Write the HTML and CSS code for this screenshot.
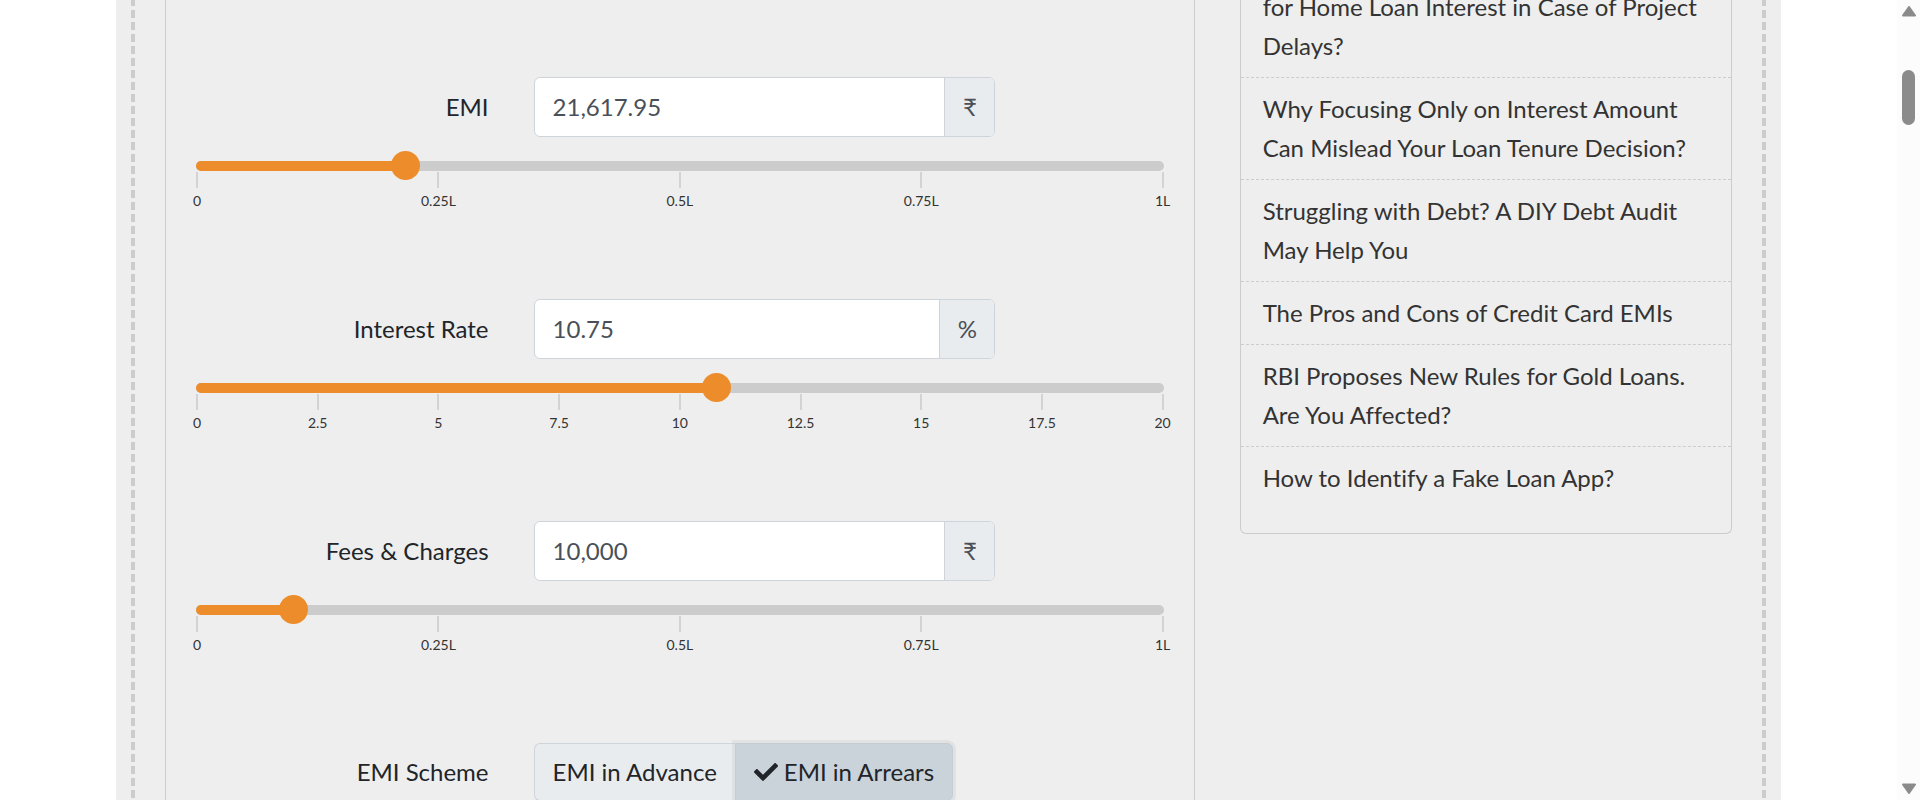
FILE: index.html
```html
<!DOCTYPE html>
<html lang="en">
<head>
<meta charset="utf-8">
<meta name="viewport" content="width=device-width, initial-scale=1">
<title>Loan Calculator</title>
<link rel="stylesheet" href="styles.css">
</head>
<body>
<div class="window">
  <div class="page">
    <div class="frame">
      <main class="calculator">
        <div class="group">
          <div class="field">
            <label class="field-label" for="emi">EMI</label>
            <div class="input-group">
              <input class="input" id="emi" type="text" value="21,617.95">
              <span class="addon">₹</span>
            </div>
          </div>
          <div class="slider">
            <div class="track"><div class="fill" style="width: 21.618%"></div></div>
            <input class="range" type="range" min="0" max="100000" step="any" value="21617.95" aria-label="EMI slider">
          </div>
          <ul class="ticks">
            <li class="tick">0</li><li class="tick">0.25L</li><li class="tick">0.5L</li><li class="tick">0.75L</li><li class="tick">1L</li>
          </ul>
        </div>

        <div class="group">
          <div class="field">
            <label class="field-label" for="rate">Interest Rate</label>
            <div class="input-group">
              <input class="input" id="rate" type="text" value="10.75">
              <span class="addon">%</span>
            </div>
          </div>
          <div class="slider">
            <div class="track"><div class="fill" style="width: 53.75%"></div></div>
            <input class="range" type="range" min="0" max="20" step="any" value="10.75" aria-label="Interest rate slider">
          </div>
          <ul class="ticks">
            <li class="tick">0</li><li class="tick">2.5</li><li class="tick">5</li><li class="tick">7.5</li><li class="tick">10</li><li class="tick">12.5</li><li class="tick">15</li><li class="tick">17.5</li><li class="tick">20</li>
          </ul>
        </div>

        <div class="group">
          <div class="field">
            <label class="field-label" for="fees">Fees &amp; Charges</label>
            <div class="input-group">
              <input class="input" id="fees" type="text" value="10,000">
              <span class="addon">₹</span>
            </div>
          </div>
          <div class="slider">
            <div class="track"><div class="fill" style="width: 10%"></div></div>
            <input class="range" type="range" min="0" max="100000" step="any" value="10000" aria-label="Fees slider">
          </div>
          <ul class="ticks">
            <li class="tick">0</li><li class="tick">0.25L</li><li class="tick">0.5L</li><li class="tick">0.75L</li><li class="tick">1L</li>
          </ul>
        </div>

        <div class="field" role="group" aria-labelledby="scheme">
          <span class="field-label" id="scheme">EMI Scheme</span>
          <div class="toggle">
            <button class="toggle-button" type="button" aria-pressed="false">EMI in Advance</button>
            <button class="toggle-button toggle-active" type="button" aria-pressed="true"><svg class="check" viewBox="0 0 512 512" aria-hidden="true"><path fill="currentColor" d="M173.898 439.404l-166.4-166.4c-9.997-9.997-9.997-26.206 0-36.204l36.203-36.204c9.997-9.998 26.207-9.998 36.204 0L192 312.69 432.095 72.596c9.997-9.997 26.207-9.997 36.204 0l36.203 36.204c9.997 9.997 9.997 26.206 0 36.204l-294.4 294.401c-9.998 9.997-26.207 9.997-36.204-.001z"/></svg>EMI in Arrears</button>
          </div>
        </div>
      </main>

      <aside class="articles">
        <ul class="article-list">
          <li class="article"><a class="article-link" href="#">for Home Loan Interest in Case of Project Delays?</a></li>
          <li class="article"><a class="article-link" href="#">Why Focusing Only on Interest Amount Can Mislead Your Loan Tenure Decision?</a></li>
          <li class="article"><a class="article-link" href="#">Struggling with Debt? A DIY Debt Audit May Help You</a></li>
          <li class="article"><a class="article-link" href="#">The Pros and Cons of Credit Card EMIs</a></li>
          <li class="article"><a class="article-link" href="#">RBI Proposes New Rules for Gold Loans. Are You Affected?</a></li>
          <li class="article"><a class="article-link" href="#">How to Identify a Fake Loan App?</a></li>
        </ul>
      </aside>
    </div>
  </div>

  <div class="scrollbar" aria-hidden="true">
    <svg class="arrow" viewBox="0 0 14 11"><path d="M7 1 L13 9.5 H1 Z" fill="#8b8b8b" stroke="#8b8b8b" stroke-width="2" stroke-linejoin="round"/></svg>
    <div class="scroll-thumb"></div>
    <svg class="arrow" viewBox="0 0 14 11"><path d="M7 10 L13 1.5 H1 Z" fill="#8b8b8b" stroke="#8b8b8b" stroke-width="2" stroke-linejoin="round"/></svg>
  </div>
</div>
</body>
</html>
```
FILE: styles.css
```css
*,
*::before {
  box-sizing: border-box;
}

body {
  margin: 0;
  background: #fff;
  color: #212529;
  font: 24px/36px Lato, "Liberation Sans", sans-serif;
  font-variant-ligatures: none;
}

ul {
  margin: 0;
  padding: 0;
  list-style: none;
}

.window {
  display: flex;
  height: 100vh;
  overflow: hidden;
}

.page {
  flex: 1;
  min-width: 0;
  padding: 0 116px;
}

/* Dashed stripes run down both sides of the grey sheet */
.frame {
  display: grid;
  grid-template-columns: repeat(3, minmax(0, 1fr));
  gap: 45px;
  min-height: 100vh;
  padding: 0 49px;
  background:
    linear-gradient(#ccc 8px, transparent 8px) left 15px top -2px / 4px 12px repeat-y,
    linear-gradient(#ccc 8px, transparent 8px) right 15px top -2px / 4px 12px repeat-y,
    #eee;
}

.calculator {
  grid-column: span 2;
  padding: 77px 30px 0;
  border: solid #ccc;
  border-width: 0 1px;
}

.group {
  margin-bottom: 88px;
}

.field {
  display: grid;
  grid-template-columns: repeat(12, minmax(0, 1fr));
  column-gap: 45px;
  align-items: center;
}

.field-label {
  grid-column: span 4;
  text-align: right;
}

.input-group {
  grid-column: span 6;
  display: flex;
  height: 60px;
  border: 1px solid #ced4da;
  border-radius: 6px;
  background: #fff;
  overflow: hidden;
}

.input {
  flex: 1;
  min-width: 0;
  padding: 0 18px;
  border: 0;
  background: transparent;
  color: #495057;
  font: inherit;
}

.addon {
  display: flex;
  align-items: center;
  padding: 0 17px 0 18px;
  border-left: 1px solid #ced4da;
  background: #e9ecef;
  color: #495057;
}

.slider {
  display: grid;
  align-items: center;
  height: 30px;
  margin-top: 14px;
}

.track,
.range {
  grid-area: 1 / 1;
}

.track {
  height: 10px;
  border-radius: 5px;
  background: #ccc;
  overflow: hidden;
}

.fill {
  height: 100%;
  background: #ed8c2b;
}

/* Overhangs the track by half a thumb so that the thumb centre reaches both ends */
.range {
  appearance: none;
  height: 30px;
  margin: 0 -15px 0 -14px;
  background: transparent;
}

.range::-webkit-slider-runnable-track {
  height: 30px;
}

.range::-webkit-slider-thumb {
  appearance: none;
  width: 29px;
  height: 29px;
  border-radius: 50%;
  background: #ed8c2b;
}

.ticks {
  display: flex;
  justify-content: space-between;
  margin-top: -9px;
  color: #333;
  font-size: 14px;
  line-height: 20px;
}

.tick {
  display: flex;
  flex-direction: column;
  align-items: center;
  gap: 3px;
  width: 2px;
  white-space: nowrap;
}

.tick::before {
  content: "";
  width: 2px;
  height: 16px;
  background: #d3d3d6;
}

.toggle {
  grid-column: span 8;
  display: flex;
}

.toggle-button {
  display: flex;
  align-items: center;
  gap: 6px;
  height: 58px;
  padding: 0 18px;
  border: 1px solid #ced4da;
  border-right-width: 0;
  border-radius: 6px 0 0 6px;
  background: #e9ecef;
  color: #212529;
  font: inherit;
  font-variant-ligatures: none;
}

.toggle-active {
  border-color: #c4ccd4;
  border-right-width: 1px;
  border-radius: 0 6px 6px 0;
  background: #cbd3da;
  box-shadow: 0 0 0 3px rgba(200, 200, 200, 0.3);
}

.check {
  width: 24px;
  height: 24px;
}

.articles {
  align-self: start;
  margin-top: -24px;
  padding-bottom: 24px;
  border: 1px solid #ccc;
  border-top: 0;
  border-radius: 0 0 6px 6px;
  color: #333;
  line-height: 39px;
}

.article {
  padding: 11px 22px 12px;
}

.article:not(:last-child) {
  border-bottom: 1px dashed #ccc;
}

.article-link {
  color: inherit;
  text-decoration: none;
}

.scrollbar {
  display: flex;
  flex-direction: column;
  align-items: center;
  width: 23px;
  padding: 6px 0;
  background: #fcfcfc;
}

.arrow {
  width: 14px;
  height: 11px;
}

.scroll-thumb {
  width: 13px;
  height: 55px;
  margin: 53px 0 auto;
  border-radius: 7px;
  background: #8b8b8b;
}
```
